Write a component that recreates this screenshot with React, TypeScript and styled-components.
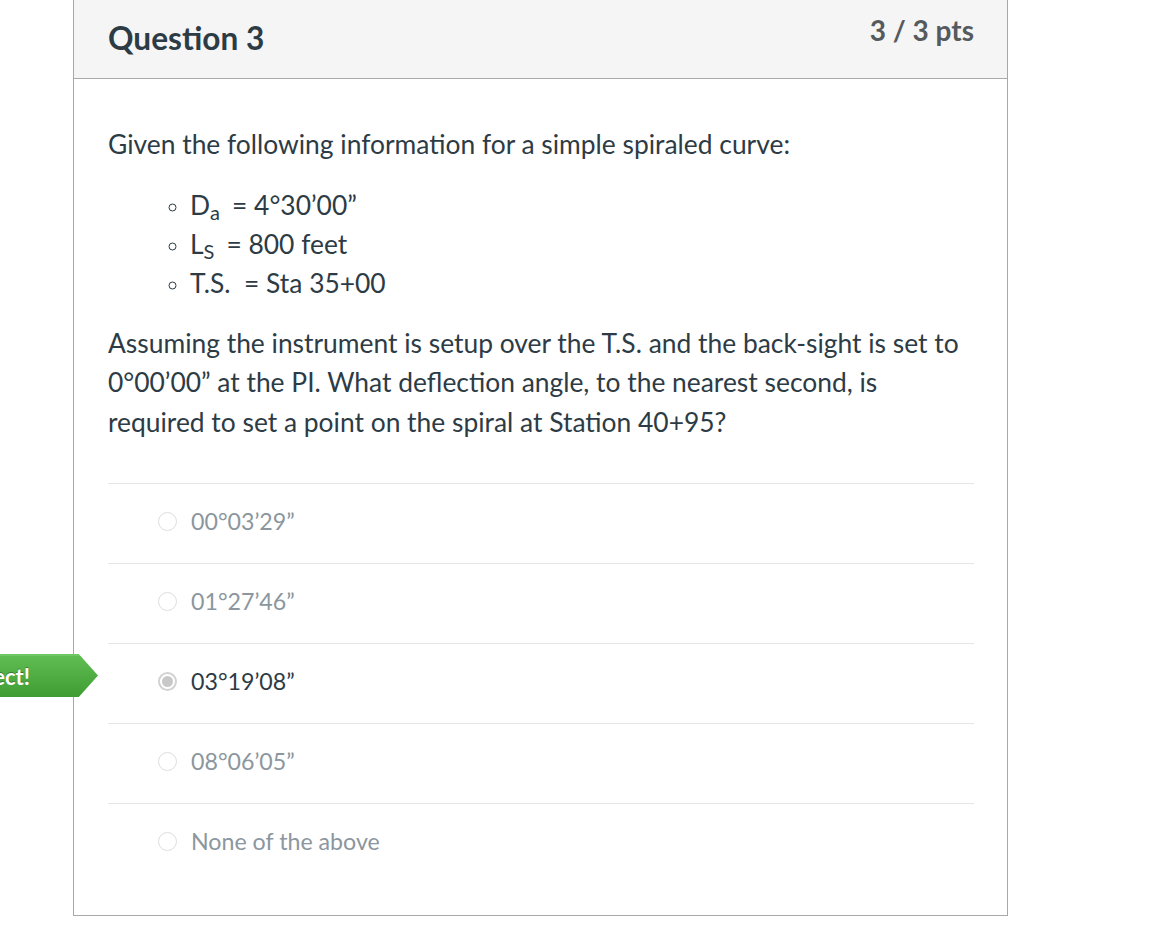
import React from "react";
import styled, { createGlobalStyle } from "styled-components";

const Global = createGlobalStyle`
  html, body { margin: 0; padding: 0; background: #fff; }
  body { font-family: Lato, "Open Sans", sans-serif; color: #2d3b45; }
  * { box-sizing: border-box; }
`;

const Page = styled.div`
  width: 1156px;
  height: 931px;
  overflow: hidden;
  padding-left: 73px;
`;

const Card = styled.div`
  width: 935px;
  border: 1px solid #a8a8a8;
  border-top: none;
  background: #fff;
`;

const Header = styled.div`
  height: 79px;
  background: #f5f5f5;
  border-bottom: 1px solid #aaaaaa;
  display: flex;
  justify-content: space-between;
  padding: 0 33px 0 34px;
`;

const Title = styled.h2`
  margin: 0;
  padding-top: 17px;
  font-family: Lato, sans-serif;
  font-weight: 700;
  font-size: 31.6px;
  line-height: 42px;
  color: #2d3b45;
`;

const Points = styled.div`
  padding-top: 10px;
  font-family: Lato, sans-serif;
  font-weight: 700;
  font-size: 28px;
  line-height: 40px;
  color: #555a5e;
`;

const Body = styled.div`
  padding: 46px 33px 32px 34px;
`;

const Para = styled.p<{ $mt?: number }>`
  margin: ${(p) => p.$mt ?? 0}px 0 0;
  font-size: 26.4px;
  line-height: 39.5px;
  color: #2d3b45;
`;

const List = styled.ul`
  margin: 21px 0 0;
  padding-left: 82px;
  list-style: circle;
  font-size: 26.4px;
  line-height: 39px;
  li::marker { font-size: 21px; color: #2d3b45; }
`;

const Sub = styled.sub`
  font-size: 20px;
  line-height: 0;
  vertical-align: -5px;
  margin-right: 12px;
`;

const Answers = styled.div`
  margin-top: 41px;
`;

const Answer = styled.div<{ $selected?: boolean }>`
  position: relative;
  height: 80px;
  border-top: 1px solid #e6e6e6;
  display: flex;
  align-items: center;
  padding-left: 50px;
  padding-bottom: 5px;
  gap: 14px;
  font-size: 23.2px;
  color: ${(p) => (p.$selected ? "#2d3b45" : "#8b969e")};
`;

const Radio = styled.span<{ $checked?: boolean }>`
  width: 19px;
  height: 19px;
  border-radius: 50%;
  flex: none;
  border: ${(p) => (p.$checked ? "2px solid #d2d2d2" : "1px solid #dedede")};
  background: #fff;
  display: flex;
  align-items: center;
  justify-content: center;
  &::after {
    content: "";
    display: ${(p) => (p.$checked ? "block" : "none")};
    width: 11px;
    height: 11px;
    border-radius: 50%;
    background: #c8c8c8;
  }
`;

const CorrectTag = styled.div`
  position: absolute;
  right: calc(100% + 10px);
  top: 10px;
  width: 160px;
  height: 43px;
  background: linear-gradient(#5fbd52, #3e9c33);
  border-top: 2px solid #70c864;
  clip-path: polygon(0 0, 88% 0, 100% 50%, 88% 100%, 0 100%);
  display: flex;
  align-items: center;
  justify-content: flex-end;
  padding-right: 68px;
  font-weight: 700;
  font-size: 22px;
  color: #fff;
  text-shadow: 0 -1px 0 rgba(0, 0, 0, 0.35);
`;

const answers = [
  { text: "00°03’29”" },
  { text: "01°27’46”" },
  { text: "03°19’08”", selected: true },
  { text: "08°06’05”" },
  { text: "None of the above" },
];

export default function App() {
  return (
    <>
      <Global />
      <Page>
        <Card>
          <Header>
            <Title>Question 3</Title>
            <Points>3 / 3 pts</Points>
          </Header>
          <Body>
            <Para>Given the following information for a simple spiraled curve:</Para>
            <List>
              <li>
                D<Sub>a</Sub>= 4°30’00”
              </li>
              <li>
                L<Sub>S</Sub>= 800 feet
              </li>
              <li>T.S.&nbsp; = Sta 35+00</li>
            </List>
            <Para $mt={21}>
              Assuming the instrument is setup over the T.S. and the back-sight is set to
              0°00’00” at the PI. What deflection angle, to the nearest second, is
              required to set a point on the spiral at Station 40+95?
            </Para>
            <Answers>
              {answers.map((a) => (
                <Answer key={a.text} $selected={a.selected}>
                  {a.selected && <CorrectTag>Correct!</CorrectTag>}
                  <Radio $checked={a.selected} />
                  <span>{a.text}</span>
                </Answer>
              ))}
            </Answers>
          </Body>
        </Card>
      </Page>
    </>
  );
}
